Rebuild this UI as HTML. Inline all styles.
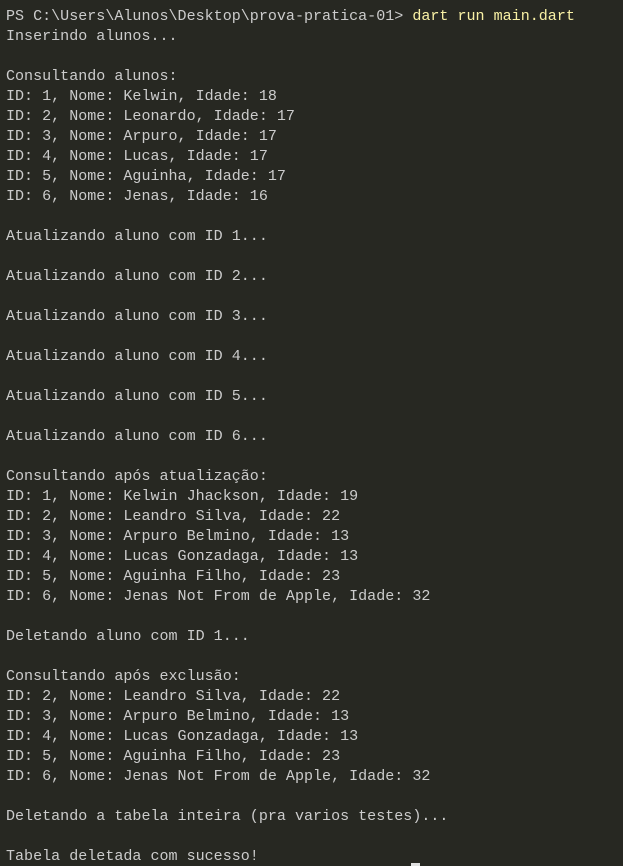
<!DOCTYPE html>
<html><head><style>
html,body{margin:0;padding:0;background:#272822;width:623px;height:866px;overflow:hidden}
pre{margin:0;padding:6px 0 0 6px;font-family:"Liberation Mono",monospace;font-size:15.05px;line-height:20px;color:#cccccc;white-space:pre}
.y{color:#f9f1a5}
.cur{position:absolute;left:411px;top:863px;width:9px;height:3px;background:#e0e0e0}
</style></head><body>
<pre>PS C:\Users\Alunos\Desktop\prova-pratica-01&gt; <span class="y">dart run main.dart</span>
Inserindo alunos...

Consultando alunos:
ID: 1, Nome: Kelwin, Idade: 18
ID: 2, Nome: Leonardo, Idade: 17
ID: 3, Nome: Arpuro, Idade: 17
ID: 4, Nome: Lucas, Idade: 17
ID: 5, Nome: Aguinha, Idade: 17
ID: 6, Nome: Jenas, Idade: 16

Atualizando aluno com ID 1...

Atualizando aluno com ID 2...

Atualizando aluno com ID 3...

Atualizando aluno com ID 4...

Atualizando aluno com ID 5...

Atualizando aluno com ID 6...

Consultando após atualização:
ID: 1, Nome: Kelwin Jhackson, Idade: 19
ID: 2, Nome: Leandro Silva, Idade: 22
ID: 3, Nome: Arpuro Belmino, Idade: 13
ID: 4, Nome: Lucas Gonzadaga, Idade: 13
ID: 5, Nome: Aguinha Filho, Idade: 23
ID: 6, Nome: Jenas Not From de Apple, Idade: 32

Deletando aluno com ID 1...

Consultando após exclusão:
ID: 2, Nome: Leandro Silva, Idade: 22
ID: 3, Nome: Arpuro Belmino, Idade: 13
ID: 4, Nome: Lucas Gonzadaga, Idade: 13
ID: 5, Nome: Aguinha Filho, Idade: 23
ID: 6, Nome: Jenas Not From de Apple, Idade: 32

Deletando a tabela inteira (pra varios testes)...

Tabela deletada com sucesso!</pre>
<div class="cur"></div>
</body></html>
